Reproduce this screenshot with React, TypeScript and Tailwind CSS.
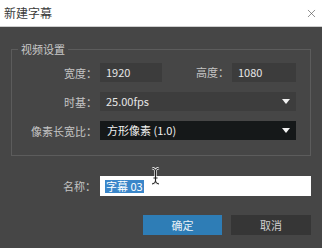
import { X } from 'lucide-react'

const font = { fontFamily: '"Noto Sans CJK SC", "Noto Sans", sans-serif' }

function Caret() {
  return (
    <svg width="8" height="6" viewBox="0 0 8 6" className="shrink-0">
      <path d="M0 0 H8 L4 5 Z" fill="#f2f2f2" />
    </svg>
  )
}

function Label({ text }: { text: string }) {
  return <div className="w-[86px] shrink-0 pr-[1px] text-right text-[11px] leading-[14px] text-[#c4c4c4]">{text}</div>
}

export default function App() {
  return (
    <div className="flex h-[248px] w-[322px] flex-col overflow-hidden bg-[#464646]" style={font}>
      {/* title bar */}
      <div className="flex h-[27px] shrink-0 items-center justify-between border-b border-[#cfcfcf] bg-white pl-[4px] pr-[4px]">
        <span className="text-[12px] text-[#3a3a3a]">新建字幕</span>
        <X size={13} strokeWidth={1.2} color="#555" />
      </div>

      <div className="relative flex flex-1 flex-col px-[11px]">
        {/* 视频设置 */}
        <fieldset className="mt-[15px] h-[114px] border border-[#5c5c5c] pb-[15px] pr-[14px]">
          <legend className="ml-[6px] px-[3px] text-[11px] leading-[14px] text-[#c8c8c8]">视频设置</legend>
          <div className="flex flex-col gap-[10px] pt-[7px]">
            <div className="flex h-[19px] items-center">
              <Label text="宽度：" />
              <div className="ml-[2px] flex h-[19px] w-[62px] items-center bg-[#3c3c3c] pl-[6px] text-[11px] text-[#e6e6e6]">1920</div>
              <div className="flex-1 pr-[3px] text-right text-[11px] text-[#c4c4c4]">高度：</div>
              <div className="flex h-[19px] w-[64px] items-center bg-[#3c3c3c] pl-[6px] text-[11px] text-[#e6e6e6]">1080</div>
            </div>
            <div className="flex h-[19px] items-center">
              <Label text="时基：" />
              <div className="ml-[2px] flex h-[19px] flex-1 items-center justify-between bg-[#3d3d3d] pl-[6px] pr-[6px] text-[11px] text-[#e6e6e6]">
                <span>25.00fps</span>
                <Caret />
              </div>
            </div>
            <div className="flex h-[19px] items-center">
              <Label text="像素长宽比：" />
              <div className="ml-[2px] flex h-[19px] flex-1 items-center justify-between bg-[#151819] pl-[7px] pr-[6px] text-[11px] text-[#f0f0f0]">
                <span>方形像素 (1.0)</span>
                <Caret />
              </div>
            </div>
          </div>
        </fieldset>

        {/* 名称 */}
        <div className="mt-[20px] flex h-[20px] items-center">
          <Label text="名称：" />
          <div className="ml-[3px] flex h-[20px] flex-1 items-center bg-white pl-[5px]">
            <span className="bg-[#3a86c9] px-[1px] text-[11px] leading-[13px] text-white">字幕 03</span>
          </div>
        </div>

        {/* buttons */}
        <div className="mt-[19px] flex justify-end gap-[9px]">
          <button className="h-[20px] w-[79px] bg-[#2e7db6] text-[11px] text-[#e8f0f6]">确定</button>
          <button className="h-[20px] w-[80px] bg-[#363636] text-[11px] text-[#d0d0d0]">取消</button>
        </div>

        {/* text cursor */}
        <svg className="absolute left-[151px] top-[140px]" width="9" height="18" viewBox="0 0 9 18">
          <path d="M1 1 Q4.5 1.5 4.5 4 Q4.5 1.5 8 1 M4.5 4 V14 M1 17 Q4.5 16.5 4.5 14 Q4.5 16.5 8 17 M2.5 11 H6.5" stroke="#eaeaea" strokeWidth="2.4" fill="none" />
          <path d="M1 1 Q4.5 1.5 4.5 4 Q4.5 1.5 8 1 M4.5 4 V14 M1 17 Q4.5 16.5 4.5 14 Q4.5 16.5 8 17 M2.5 11 H6.5" stroke="#222" strokeWidth="1" fill="none" />
        </svg>
      </div>
    </div>
  )
}
